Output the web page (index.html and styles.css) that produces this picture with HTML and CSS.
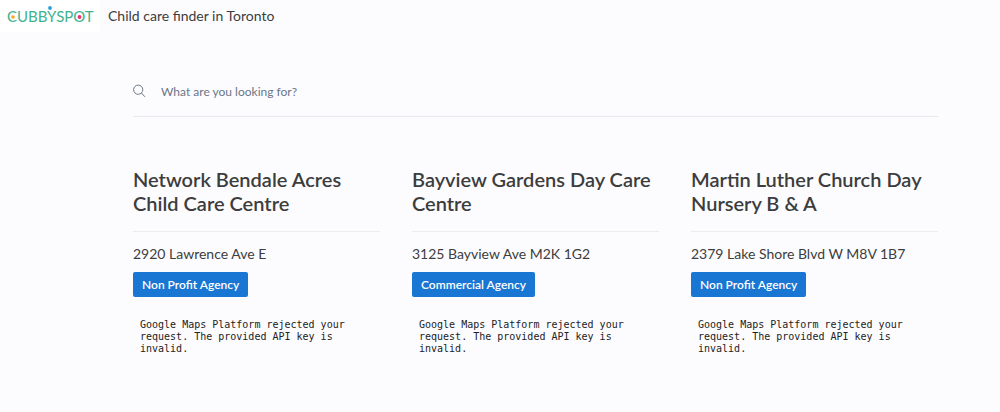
FILE: index.html
```html
<!DOCTYPE html>
<html lang="en">
<head>
    <meta charset="UTF-8">
    <meta name="viewport" content="width=device-width, initial-scale=1.0">
    <title>Child care finder in Toronto</title>
    <link rel="stylesheet" href="styles.css">
</head>
<body>
    <header class="navbar">
        <a class="logo" href="#" aria-label="Cubbyspot">
            <svg width="100" height="32" viewBox="0 0 100 32">
                <text class="logo-text" x="7" y="22">CUBBYSPOT</text>
                <circle cx="13" cy="17" r="1.8" fill="#f6a81c"/>
                <circle cx="79.5" cy="17" r="1.9" fill="#e8336d"/>
                <circle cx="50" cy="8" r="1.9" fill="#2a9fd8"/>
            </svg>
        </a>
        <span class="tagline">Child care finder in Toronto</span>
    </header>

    <main class="container">
        <!-- Search -->
        <form class="search">
            <label for="search">
                <svg class="search-icon" width="14" height="14" viewBox="0 0 14 14" role="img" aria-label="Search">
                    <circle cx="5.2" cy="5.7" r="4.6"/>
                    <path d="M8.5 9l3.4 3.8"/>
                </svg>
            </label>
            <input type="text" id="search" placeholder="What are you looking for?">
        </form>

        <!-- Results -->
        <div class="cards">
            <article class="card">
                <h2>Network Bendale Acres Child Care Centre</h2>
                <p class="address">2920 Lawrence Ave E</p>
                <span class="tag">Non Profit Agency</span>
                <pre class="map-error">Google Maps Platform rejected your request. The provided API key is invalid.</pre>
            </article>
            <article class="card">
                <h2>Bayview Gardens Day Care Centre</h2>
                <p class="address">3125 Bayview Ave M2K 1G2</p>
                <span class="tag">Commercial Agency</span>
                <pre class="map-error">Google Maps Platform rejected your request. The provided API key is invalid.</pre>
            </article>
            <article class="card">
                <h2>Martin Luther Church Day Nursery B &amp; A</h2>
                <p class="address">2379 Lake Shore Blvd W M8V 1B7</p>
                <span class="tag">Non Profit Agency</span>
                <pre class="map-error">Google Maps Platform rejected your request. The provided API key is invalid.</pre>
            </article>
        </div>
    </main>
</body>
</html>
```
FILE: styles.css
```css
* {
    box-sizing: border-box;
}

body {
    font-family: "Avenir Next", Lato, sans-serif;
    margin: 0;
    background-color: #fcfcff;
    color: #3d3d3d;
}

.navbar {
    display: flex;
    align-items: center;
    gap: 8px;
}

.logo {
    display: flex;
    background-color: #fff;
}

.logo-text {
    font-family: Lato, sans-serif;
    font-size: 15px;
    fill: #3fb28f;
}

.tagline {
    font-size: 14px;
    line-height: 20px;
}

.container {
    padding: 40px 62px 40px 133px;
}

.search {
    display: flex;
    align-items: center;
    gap: 14px;
    height: 45px;
    margin-bottom: 50px;
    padding-bottom: 6px;
    border-bottom: 1px solid #e8e9ed;
}

.search label {
    display: flex;
}

.search-icon {
    fill: none;
    stroke: #6b7686;
    stroke-width: 1;
}

.search input {
    flex: 1;
    border: none;
    outline: none;
    padding: 0;
    background: transparent;
    font-family: inherit;
    font-size: 12px;
    color: #3d3d3d;
}

.search input::placeholder {
    color: #6b7686;
}

.cards {
    display: grid;
    grid-template-columns: repeat(3, 1fr);
    gap: 32px;
}

h2 {
    margin: 0 0 12px;
    padding-bottom: 16px;
    border-bottom: 1px solid #ececef;
    font-size: 20px;
    font-weight: 600;
    line-height: 24px;
}

.address {
    margin: 0 0 8px;
    font-size: 14px;
    line-height: 20px;
}

.tag {
    display: inline-block;
    padding: 2px 9px;
    border-radius: 2px;
    background-color: #1976d2;
    color: #fff;
    font-size: 12px;
    font-weight: 600;
    line-height: 21px;
}

.map-error {
    margin: 22px 0 0;
    padding: 0 7px;
    font-family: "DejaVu Sans Mono", monospace;
    font-size: 10px;
    line-height: 12px;
    white-space: pre-wrap;
    color: #222;
}
```
